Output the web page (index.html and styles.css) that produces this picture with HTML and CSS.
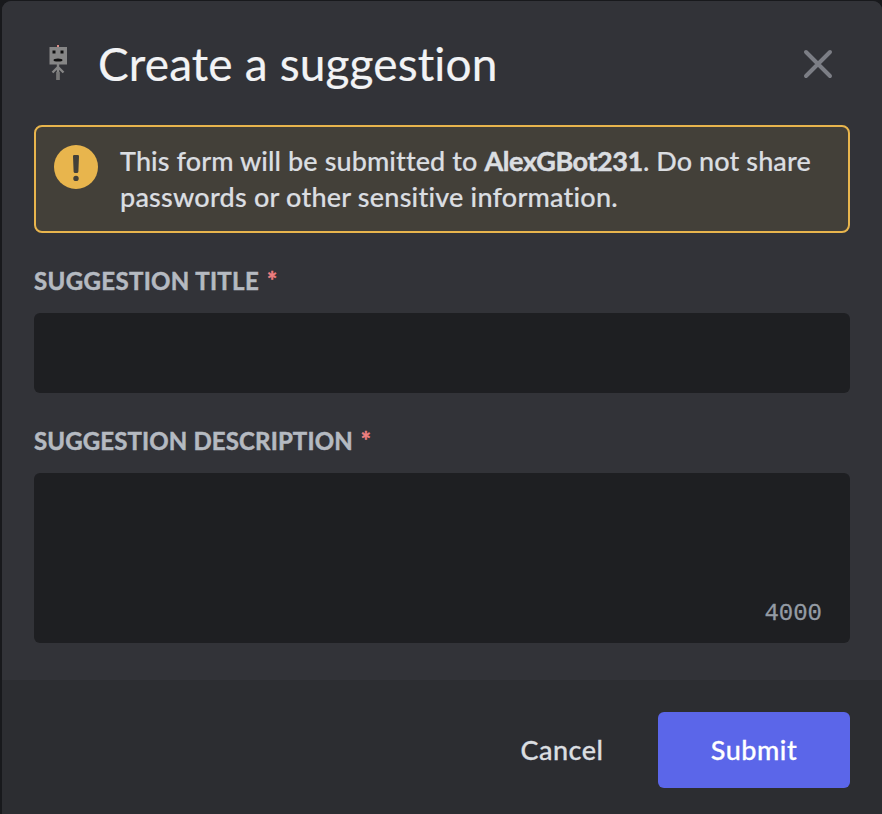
FILE: index.html
```html
<!DOCTYPE html>
<html lang="en">
<head>
<meta charset="utf-8">
<title>Create a suggestion</title>
<link rel="stylesheet" href="styles.css">
</head>
<body>
<form class="modal">
  <div class="content">
    <header class="header">
      <svg class="avatar" width="48" height="60" viewBox="0 0 48 60">
        <path d="M24 30v16M24 33l-5.500 5.500M24 33l5.500 5.500" stroke="#858585" stroke-width="2.400" fill="none"/>
        <path d="M24 38v8" stroke="#777" stroke-width="3.600"/>
        <path d="M23 11h2v3h-2z" fill="#dc8c86"/>
        <path d="M15.500 13h17.500v17.500H15.500z" fill="#868686"/>
        <path d="M18.500 16.500h3v3h-3zM26.500 16.500h3v3h-3z" fill="#101010"/>
        <ellipse cx="24" cy="26" rx="4.500" ry="1.600" fill="#101010"/>
      </svg>
      <h1 class="title">Create a suggestion</h1>
      <svg class="close" width="32" height="32" viewBox="0 0 32 32">
        <path d="M4 4l24 24M28 4L4 28" stroke="#7c7e85" stroke-width="4" stroke-linecap="round"/>
      </svg>
    </header>
    <div class="notice">
      <svg class="warning" width="44" height="44" viewBox="0 0 44 44">
        <circle cx="22" cy="22" r="22" fill="#e8b54d"/>
        <path d="M20.200 10h3.600q1.300 0 1.200 1.400l-.6 15.200q-.1 1.400-1.200 1.400h-2.400q-1.100 0-1.200-1.400L19 11.400q-.1-1.400 1.200-1.400z" fill="#434039"/>
        <circle cx="22" cy="33.400" r="2.700" fill="#434039"/>
      </svg>
      <p class="message"><span class="line">This form will be submitted to <b>AlexGBot231</b>. Do not share</span> <span class="line second">passwords or other sensitive information.</span></p>
    </div>
    <div class="label"><span class="label-title">Suggestion title</span><span class="star">*</span></div>
    <div class="field"></div>
    <div class="label"><span class="label-description">Suggestion description</span><span class="star">*</span></div>
    <div class="field area"><span class="count">4000</span></div>
  </div>
  <footer class="footer">
    <button type="button" class="button cancel">Cancel</button>
    <button type="button" class="button submit">Submit</button>
  </footer>
</form>
</body>
</html>
```
FILE: styles.css
```css
* { box-sizing: border-box; }
body { margin: 0; background: #18191c; font-family: Lato, "Noto Sans", sans-serif; font-variant-ligatures: none; }
.modal { margin: 1px 0 0 2px; width: 880px; height: 813px; background: #2c2d31; border-radius: 9px 9px 0 0; overflow: hidden; }
.content { height: 679px; padding: 32px 32px 0; background: #323338; }
.header { display: flex; align-items: center; height: 62px; }
.avatar { flex: none; }
.title { flex: 1; margin: 0 0 0 16px; color: #f2f3f5; font-size: 46px; line-height: 62px; font-weight: 400; letter-spacing: .15px; white-space: nowrap; -webkit-text-stroke: .2px; }
.close { flex: none; margin-right: 16px; }
.notice { display: flex; height: 108px; margin-top: 30px; padding: 16px 18px; border: 2px solid #e8b54d; border-radius: 8px; background: #434039; }
.warning { flex: none; margin-top: 2px; }
.message { margin: 0 0 0 22px; color: #dbdee1; font-size: 27px; line-height: 36px; font-weight: 500; letter-spacing: .1px; -webkit-text-stroke: .2px; }
.message b { letter-spacing: -.4px; -webkit-text-stroke: .5px; }
.line { display: block; white-space: nowrap; }
.second { letter-spacing: .22px; }
.label { display: flex; height: 32px; margin-top: 32px; margin-bottom: 16px; color: #b5bac1; font-size: 24px; line-height: 32px; font-weight: 700; text-transform: uppercase; white-space: nowrap; -webkit-text-stroke: .5px; }
.label-title { letter-spacing: .35px; }
.label-description { letter-spacing: .13px; }
.star { margin-left: 8px; color: #ee7f80; font-size: 24px; }
.field { height: 80px; border-radius: 6px; background: #1e1f22; }
.area { display: flex; align-items: flex-end; justify-content: flex-end; height: 170px; padding: 0 28px 14px; }
.count { color: #949ba4; font-family: "Liberation Mono", monospace; font-size: 24px; line-height: 30px; -webkit-text-stroke: .3px; }
.footer { display: flex; justify-content: flex-end; padding: 32px; }
.button { height: 76px; padding: 0; border: 0; border-radius: 6px; background: none; color: #dbdee1; font: 500 27px/76px Lato, "Noto Sans", sans-serif; letter-spacing: .5px; white-space: nowrap; -webkit-text-stroke: .3px; }
.cancel { width: 192px; }
.submit { width: 192px; background: #5b66e9; color: #fff; }
```
